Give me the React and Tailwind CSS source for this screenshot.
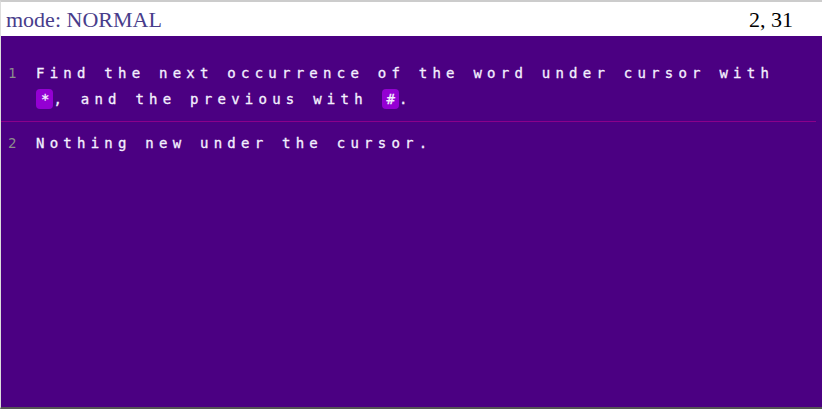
import React from "react"

const lines = [
    {
        n: 1,
        parts: [
            "Find the next occurrence of the word under cursor with ",
            { key: "*" },
            ", and the previous with ",
            { key: "#" },
            ".",
        ],
    },
    { n: 2, parts: ["Nothing new under the cursor."] },
]

const Key = ({ children }) => (
    <span className="rounded-[4px] bg-[#9400d3] py-[2px] pl-[5px] pr-[0px] tracking-[4px]">
        {children}
    </span>
)

export default function App() {
    return (
        <div className="flex h-[409px] w-[822px] flex-col border-t-2 border-b-2 border-l border-t-[#cccccc] border-b-[#555555] border-l-[#dddddd] bg-[#4b0082]">
            {/* barra de estado */}
            <div className="flex h-[34px] items-center justify-between bg-white pl-[5px] pr-[29px] font-['Liberation_Serif',serif] text-[22px]">
                <span className="text-[#483d8b]">mode: NORMAL</span>
                <span className="text-black">2, 31</span>
            </div>

            <div className="flex flex-col pt-[24px] font-['DejaVu_Sans_Mono',monospace] text-[14px] leading-[26px]">
                {lines.map((line, i) => (
                    <div
                        key={line.n}
                        className={
                            i < lines.length - 1
                                ? "flex border-b border-[#8b008b] pb-[9px] mb-[8px] mr-[6px]"
                                : "flex"
                        }
                    >
                        <span className="w-[35px] shrink-0 pl-[7px] text-[#8c8c8c]">
                            {line.n}
                        </span>
                        <span className="w-[760px] tracking-[5.24px] text-[#f4f0ff] [-webkit-text-stroke:0.3px_#f4f0ff]">
                            {line.parts.map((p, j) =>
                                typeof p === "string" ? (
                                    <span key={j}>{p}</span>
                                ) : (
                                    <Key key={j}>{p.key}</Key>
                                )
                            )}
                        </span>
                    </div>
                ))}
            </div>
        </div>
    )
}
